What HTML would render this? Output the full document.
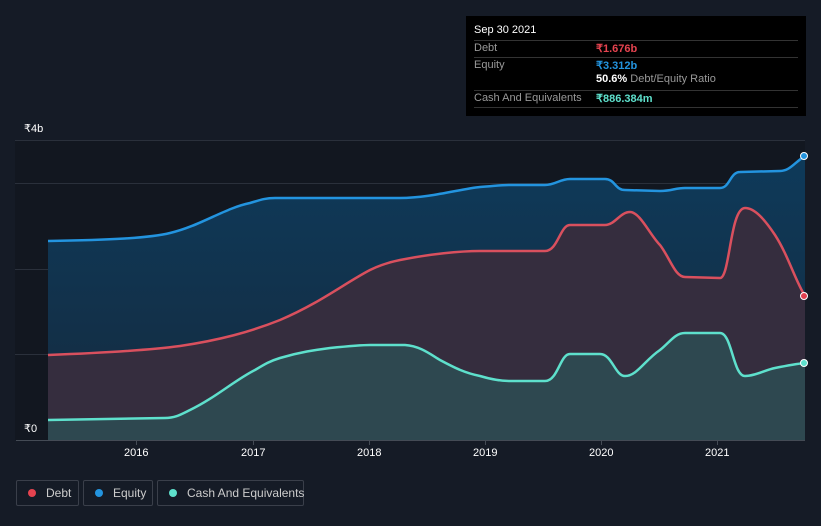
<!DOCTYPE html>
<html><head><style>
html,body{margin:0;width:821px;height:526px;overflow:hidden}
body{background:#151b26;font-family:"Liberation Sans",sans-serif;position:relative}
.t{position:absolute;color:#fff;font-size:11px}
.tip{position:absolute;left:466px;top:16px;width:340px;height:100px;background:#000}
.row{position:absolute;left:8px;width:324px;border-top:1px solid #333;height:16px;font-size:11px;color:#999}
.leg{position:absolute;top:480px;height:26px;border:1px solid #3a3f4a;border-radius:2px;color:#ccc;font-size:12px;line-height:24px;box-sizing:border-box;white-space:nowrap}
.dot{display:inline-block;width:8px;height:8px;border-radius:50%;margin:0 10px 0 11px}
</style></head><body>
<svg width="821" height="526" style="position:absolute;left:0;top:0">
<defs>
<linearGradient id="ge" x1="0" y1="0" x2="0" y2="1"><stop offset="0" stop-color="#0e3a5a"/><stop offset="1" stop-color="#152a3e"/></linearGradient>
</defs>
<rect x="15" y="140" width="790" height="300" fill="#121720"/>
<g stroke="#2a303b" stroke-width="1">
<line x1="15" y1="140.5" x2="805" y2="140.5"/><line x1="15" y1="183.5" x2="805" y2="183.5"/><line x1="15" y1="269.5" x2="805" y2="269.5"/><line x1="15" y1="354.5" x2="805" y2="354.5"/>
</g>
<path d="M48,241 C110,240 150,238 170,233 C200,226 225,208 250,203 C260,200 265,198 275,198 L400,198 C430,198 460,189 480,187 C495,186 500,185 510,185 L545,185 C555,185 560,179 570,179 L605,179 C615,179 615,190 625,190 L660,191 C672,191 675,188 685,188 L720,188 C730,188 730,172 740,172 L780,171 C790,171 795,162 805,156 L805,440 L48,440Z" fill="url(#ge)"/>
<path d="M48,355 C100,353 150,350 180,346 C220,340 250,332 280,320 C320,303 345,283 370,270 C380,265 390,262 400,260 C430,254 460,251 480,251 L545,251 C558,251 560,225 570,225 L605,225 C615,225 620,212 630,212 C640,212 650,235 660,245 C670,258 675,277 685,277 L720,278 C730,278 730,208 745,208 C755,208 765,220 775,235 C788,255 795,280 805,296 L805,440 L48,440Z" fill="#352d3e"/>
<path d="M48,420 L165,418 C175,418 180,415 190,410 C215,398 235,380 255,370 C265,364 270,361 280,358 C300,352 315,350 330,348 C350,346 360,345 370,345 L405,345 C420,346 430,354 440,360 C455,368 465,373 480,376 C490,379 500,381 510,381 L545,381 C558,381 560,354 570,354 L600,354 C612,354 615,376 625,376 C637,376 645,360 660,350 C670,342 675,333 685,333 L720,333 C732,333 733,376 745,376 C755,376 765,370 775,368 C785,366 795,364 805,363 L805,440 L48,440Z" fill="#2e4850"/>
<path d="M48,241 C110,240 150,238 170,233 C200,226 225,208 250,203 C260,200 265,198 275,198 L400,198 C430,198 460,189 480,187 C495,186 500,185 510,185 L545,185 C555,185 560,179 570,179 L605,179 C615,179 615,190 625,190 L660,191 C672,191 675,188 685,188 L720,188 C730,188 730,172 740,172 L780,171 C790,171 795,162 805,156" fill="none" stroke="#2394df" stroke-width="2.5"/>
<path d="M48,355 C100,353 150,350 180,346 C220,340 250,332 280,320 C320,303 345,283 370,270 C380,265 390,262 400,260 C430,254 460,251 480,251 L545,251 C558,251 560,225 570,225 L605,225 C615,225 620,212 630,212 C640,212 650,235 660,245 C670,258 675,277 685,277 L720,278 C730,278 730,208 745,208 C755,208 765,220 775,235 C788,255 795,280 805,296" fill="none" stroke="#d9505e" stroke-width="2.5"/>
<path d="M48,420 L165,418 C175,418 180,415 190,410 C215,398 235,380 255,370 C265,364 270,361 280,358 C300,352 315,350 330,348 C350,346 360,345 370,345 L405,345 C420,346 430,354 440,360 C455,368 465,373 480,376 C490,379 500,381 510,381 L545,381 C558,381 560,354 570,354 L600,354 C612,354 615,376 625,376 C637,376 645,360 660,350 C670,342 675,333 685,333 L720,333 C732,333 733,376 745,376 C755,376 765,370 775,368 C785,366 795,364 805,363" fill="none" stroke="#5ee0cc" stroke-width="2.5"/>
<circle cx="804" cy="156" r="3.5" fill="#2394df" stroke="#fff" stroke-width="1"/>
<circle cx="804" cy="296" r="3.5" fill="#e04050" stroke="#fff" stroke-width="1"/>
<circle cx="804" cy="363" r="3.5" fill="#5ee0cc" stroke="#fff" stroke-width="1"/>
<line x1="16" y1="440.5" x2="805" y2="440.5" stroke="#444b55"/>
<g stroke="#444b55"><line x1="136.5" y1="440" x2="136.5" y2="445"/><line x1="253.5" y1="440" x2="253.5" y2="445"/><line x1="369.5" y1="440" x2="369.5" y2="445"/><line x1="485.5" y1="440" x2="485.5" y2="445"/><line x1="601.5" y1="440" x2="601.5" y2="445"/><line x1="717.5" y1="440" x2="717.5" y2="445"/></g>
</svg>
<div class="t" style="left:24px;top:122px">₹4b</div>
<div class="t" style="left:24px;top:422px">₹0</div>
<div class="t" style="left:124px;top:447px">2016</div>
<div class="t" style="left:241px;top:447px">2017</div>
<div class="t" style="left:357px;top:447px">2018</div>
<div class="t" style="left:473px;top:447px">2019</div>
<div class="t" style="left:589px;top:447px">2020</div>
<div class="t" style="left:705px;top:447px">2021</div>
<div class="tip">
<div style="position:absolute;left:8px;top:8px;color:#fff;font-size:11px">Sep 30 2021</div>
<div class="row" style="top:24px"><span style="position:absolute;top:1px">Debt</span><span style="position:absolute;left:122px;top:1px;color:#e5434f;font-weight:bold">₹1.676b</span></div>
<div class="row" style="top:41px"><span style="position:absolute;top:1px">Equity</span><span style="position:absolute;left:122px;top:1px;color:#2394df;font-weight:bold">₹3.312b</span></div>
<div class="row" style="top:57px;border:0"><span style="position:absolute;left:122px;top:0px"><b style="color:#fff">50.6%</b> Debt/Equity Ratio</span></div>
<div class="row" style="top:74px;border-bottom:1px solid #333"><span style="position:absolute;top:1px">Cash And Equivalents</span><span style="position:absolute;left:122px;top:1px;color:#5ee0cc;font-weight:bold">₹886.384m</span></div>
</div>
<div class="leg" style="left:16px;width:63px"><span class="dot" style="background:#e5434f"></span>Debt</div>
<div class="leg" style="left:83px;width:70px"><span class="dot" style="background:#2394df"></span>Equity</div>
<div class="leg" style="left:157px;width:147px"><span class="dot" style="background:#5ee0cc"></span>Cash And Equivalents</div>
</body></html>
